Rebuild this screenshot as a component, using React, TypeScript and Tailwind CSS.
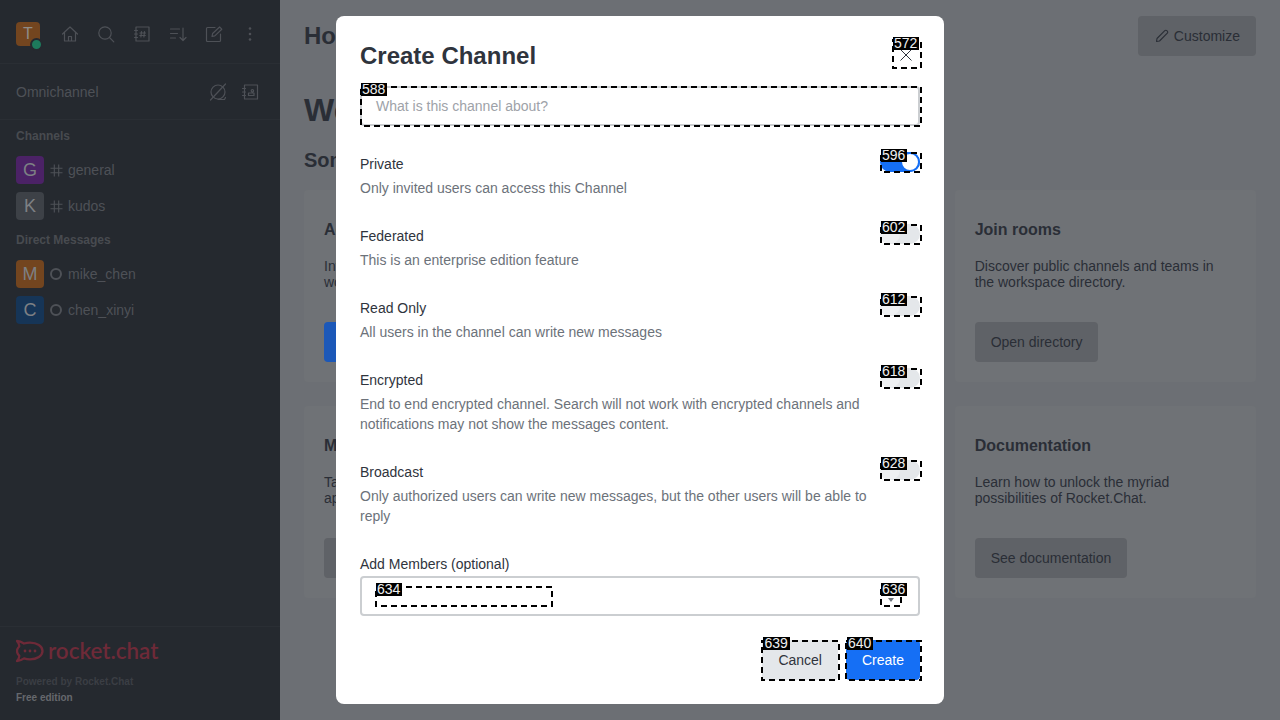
import React from "react";

const Ico = ({ children, size = 20 }: { children: React.ReactNode; size?: number }) => (
  <svg width={size} height={size} viewBox="0 0 20 20" fill="none" stroke="#4e5157" strokeWidth="1.2" strokeLinecap="round" strokeLinejoin="round">
    {children}
  </svg>
);

const Mark = ({ id, box, children }: { id: string; box: string; children?: React.ReactNode }) => (
  <div className="relative">
    {children}
    <svg className={`absolute pointer-events-none ${box}`}>
      <rect x="1" y="1" className="[width:calc(100%-2px)] [height:calc(100%-2px)]" fill="none" stroke="#000" strokeWidth="2" strokeDasharray="6 4" />
    </svg>
    <span className="absolute left-[1px] -top-[3px] bg-black text-[#f0f0f0] text-[14px] leading-[13px] pl-[1px] pr-[2px] font-['Liberation_Sans',sans-serif]">{id}</span>
  </div>
);

const Toggle = ({ on, id }: { on?: boolean; id: string }) => (
  <Mark id={id} box="left-0 top-0 w-[42px] h-[21px]">
    <div className={`w-10 h-5 rounded-full flex ${on ? "bg-[#156ff5] justify-end" : "bg-[#e4e7ea] justify-start"}`}>
      <div className={`w-5 h-5 rounded-full ${on ? "bg-white border-2 border-[#156ff5]" : "bg-[#eef0f2]"}`} />
    </div>
  </Mark>
);

const Opt = ({ title, desc, on, id }: { title: string; desc: string; on?: boolean; id: string }) => (
  <div className="flex items-start justify-between">
    <div className="w-[512px]">
      <div className="text-sm leading-5 text-[#2f343d]">{title}</div>
      <div className="mt-1 text-sm leading-5 text-[#6c727a]">{desc}</div>
    </div>
    <div className="-mt-[2px]">
      <Toggle on={on} id={id} />
    </div>
  </div>
);

const Card = ({ title, text, btn, blue }: { title: string; text: string; btn: string; blue?: boolean }) => (
  <div className="h-[192px] bg-[#6f7276] rounded px-5 pt-[29px]">
    <div className="pt-[1px] text-base leading-5 font-bold text-[#2a2e36]">{title}</div>
    <div className="mt-[18px] h-8 text-sm leading-4 text-[#2a2e36]">{text}</div>
    <div className={`mt-8 inline-flex h-10 items-center rounded px-4 text-sm ${blue ? "bg-[#1c58b8] text-[#c4c6c9]" : "bg-[#5f6267] text-[#2a2e36]"}`}>{btn}</div>
  </div>
);

const Room = ({ letter, bg, name, dm }: { letter: string; bg: string; name: string; dm?: boolean }) => (
  <div className="h-9 px-4 flex items-center">
    <div className={`w-7 h-7 rounded flex items-center justify-center text-lg text-[#7d8084] ${bg}`}>{letter}</div>
    <div className="w-6 flex justify-center">
      {dm ? (
        <span className="w-3 h-3 rounded-full border-2 border-[#4e5157]" />
      ) : (
        <svg width="13" height="13" viewBox="0 0 13 13" fill="none" stroke="#4e5157" strokeWidth="1.1">
          <path d="M4.300 0.500V12.500M8.700 0.500V12.500M0.500 4.300H12.500M0.500 8.700H12.500" />
        </svg>
      )}
    </div>
    <span className="text-sm text-[#4e5157]">{name}</span>
  </div>
);

export default function App() {
  return (
    <div className="relative w-[1280px] h-[720px] overflow-hidden flex font-['Liberation_Sans',Arial,sans-serif] bg-[#6c6f74]">
      <aside className="w-[280px] h-full bg-[#25292f] flex flex-col shrink-0">
        <div className="h-[64px] px-4 pt-[4px] flex items-center border-b border-[#2a2e34]">
          <div className="relative w-6 h-6 rounded bg-[#73451f] flex items-center justify-center text-base text-[#8f8c88]">
            T
            <span className="absolute -right-[3px] -bottom-[5px] w-[13px] h-[13px] rounded-full bg-[#1d7a5c] border-2 border-[#25292f]" />
          </div>
          <div className="ml-5 flex items-center gap-4">
            <Ico><path d="M2.500 10 10 3l7.500 7M4.500 8.500V17h11V8.500M8.500 17v-4.500h3V17" /></Ico>
            <Ico><circle cx="9" cy="9" r="6.200" /><path d="m13.500 13.500 4.300 4.300" /></Ico>
            <Ico><path d="M4 3h13v14H4zM2.500 6.500H5.500M2.500 10H5.500M2.500 13.500H5.500M9.500 7.500l-.6 5.500M12.500 7.500l-.6 5.500M8 9h5.500M7.800 11.500h5.500" /></Ico>
            <Ico><path d="M2.500 5h9M2.500 9.500h7M2.500 14h5M15 4v12.500M12 13.500l3 3 3-3" /></Ico>
            <Ico><path d="M16.500 10v6.500a1 1 0 0 1-1 1h-12a1 1 0 0 1-1-1v-12a1 1 0 0 1 1-1H11M8 12.500l.6-3 7-6.500 2.200 2.200-7 6.700z" /></Ico>
            <svg width="20" height="20" viewBox="0 0 20 20" fill="#4e5157"><circle cx="10" cy="4.500" r="1.300" /><circle cx="10" cy="10" r="1.300" /><circle cx="10" cy="15.500" r="1.300" /></svg>
          </div>
        </div>
        <div className="h-[56px] pl-4 pr-[20px] flex items-center justify-between border-b border-[#2a2e34]">
          <span className="text-sm text-[#4e5157]">Omnichannel</span>
          <div className="flex items-center gap-3">
            <Ico><circle cx="10" cy="10" r="7" /><path d="M2.500 18 17.500 2M10 17.500h6.500l1-2" /></Ico>
            <Ico><path d="M4.500 3h13v14h-13zM2.500 6.500h3M2.500 10h3M2.500 13.500h3M8.500 13.500h5.500v-2.500H8.500zM11.200 8.800a1.200 1.200 0 1 0 0-.1" /></Ico>
          </div>
        </div>
        <div className="h-8 px-4 flex items-center text-xs font-bold text-[#484b50]">Channels</div>
        <Room letter="G" bg="bg-[#4b2266]" name="general" />
        <Room letter="K" bg="bg-[#3d4147]" name="kudos" />
        <div className="h-8 px-4 flex items-center text-xs font-bold text-[#484b50]">Direct Messages</div>
        <Room letter="M" bg="bg-[#73451f]" name="mike_chen" dm />
        <Room letter="C" bg="bg-[#163557]" name="chen_xinyi" dm />
        <div className="mt-auto h-[94px] border-t border-[#2a2e34] px-4 pt-[12px]">
          <div className="flex items-center h-6">
            <svg width="28" height="24" viewBox="0 0 28 24" fill="none">
              <path d="M1 2c3 0 5 1.200 7 2.500C10 4 12 3.700 14 3.700c7 0 12.500 3.500 12.500 8.300S21 20.300 14 20.300c-2 0-4-.3-6-.9C6 20.800 4 22 1 22c1.500-1.800 2.500-3.600 2.200-5.500C1.800 15.200 1 13.700 1 12s.8-3.200 2.200-4.500C3.500 5.600 2.500 3.800 1 2z" stroke="#6e2a38" strokeWidth="2.300" strokeLinejoin="round" />
              <circle cx="9" cy="12" r="1.400" fill="#6e2a38" /><circle cx="14" cy="12" r="1.400" fill="#6e2a38" /><circle cx="19" cy="12" r="1.400" fill="#6e2a38" />
            </svg>
            <span className="ml-[4px] text-[22.400px] leading-6 font-semibold text-[#6e2a38] font-['Lato',sans-serif]">rocket.chat</span>
          </div>
          <div className="mt-[11px] text-[10px] leading-4 font-bold text-[#3b3e44]">Powered by Rocket.Chat</div>
          <div className="text-[10px] leading-4 font-bold text-[#65686d]">Free edition</div>
        </div>
      </aside>

      <main className="flex-1 px-6">
        <div className="h-[72px] flex items-center justify-between">
          <div className="text-2xl font-bold text-[#2a2e36]">Home</div>
          <div className="h-10 px-4 flex items-center gap-1 rounded bg-[#5f6267] text-sm text-[#2a2e36]">
            <svg width="16" height="16" viewBox="0 0 16 16" fill="none" stroke="#2a2e36" strokeWidth="1.100" strokeLinejoin="round"><path d="M2.500 13.500l.5-3L10.800 2.700a1.400 1.400 0 0 1 2 0l.5.5a1.400 1.400 0 0 1 0 2L5.500 13z" /></svg>
            Customize
          </div>
        </div>
        <div className="mt-[18px] text-[32px] leading-10 font-bold text-[#2a2e36]">Welcome to Workspace</div>
        <div className="mt-4 text-xl leading-7 font-bold text-[#2a2e36]">Some ideas to get you started</div>
        <div className="mt-4 grid grid-cols-3 gap-6">
          <Card title="Add users" text="Invite people to your workspace and start working together." btn="Add users" blue />
          <Card title="Create channels" text="Create public and private channels by team or topic." btn="Create channel" />
          <Card title="Join rooms" text="Discover public channels and teams in the workspace directory." btn="Open directory" />
          <Card title="Mobile apps" text="Take Rocket.Chat with you with mobile applications." btn="Google Play" />
          <Card title="Desktop apps" text="Install Rocket.Chat on your Windows, Linux and Mac." btn="Windows" />
          <Card title="Documentation" text="Learn how to unlock the myriad possibilities of Rocket.Chat." btn="See documentation" />
        </div>
      </main>

      <div className="absolute inset-0 flex items-center justify-center pointer-events-none">
        <div className="w-[608px] h-[688px] bg-white rounded-lg p-6 flex flex-col">
          <div className="h-7 flex items-center justify-between">
            <div className="pt-1 text-2xl font-bold text-[#2f343d]">Create Channel</div>
            <Mark id="572" box="left-0 -top-[1px] w-[30px] h-[30px]">
              <div className="w-7 h-7 flex items-center justify-center pt-[2px]">
                <svg width="16" height="16" viewBox="0 0 16 16" fill="none" stroke="#2f343d" strokeWidth="1"><path d="M2.500 2.500l11 11M13.500 2.500l-11 11" /></svg>
              </div>
            </Mark>
          </div>
          <div className="mt-[18px]">
            <Mark id="588" box="left-0 top-0 w-[562px] h-[41px]">
              <div className="h-10 rounded border-2 border-[#cbced1] flex items-center px-[14px] text-sm text-[#9ea2a8]">What is this channel about?</div>
            </Mark>
          </div>
          <div className="mt-7 flex flex-col gap-7">
            <Opt title="Private" desc="Only invited users can access this Channel" on id="596" />
            <Opt title="Federated" desc="This is an enterprise edition feature" id="602" />
            <Opt title="Read Only" desc="All users in the channel can write new messages" id="612" />
            <Opt title="Encrypted" desc="End to end encrypted channel. Search will not work with encrypted channels and notifications may not show the messages content." id="618" />
            <Opt title="Broadcast" desc="Only authorized users can write new messages, but the other users will be able to reply" id="628" />
            <div>
              <div className="text-sm leading-5 text-[#2f343d]">Add Members (optional)</div>
              <div className="mt-[2px] h-10 rounded border-2 border-[#cbced1] flex items-center justify-between pl-[13px] pr-[16px]">
                <Mark id="634" box="left-0 top-0 w-[178px] h-[21px]">
                  <div className="w-[178px] h-[21px]" />
                </Mark>
                <Mark id="636" box="left-0 top-0 w-[22px] h-[21px]">
                  <div className="w-[22px] h-[21px] flex items-end justify-center pb-[5px]">
                    <svg width="6" height="4" viewBox="0 0 6 4" fill="#6c727a"><path d="M0 0h6L3 4z" /></svg>
                  </div>
                </Mark>
              </div>
            </div>
          </div>
          <div className="mt-6 flex justify-end gap-2">
            <Mark id="639" box="-left-[1px] top-0 w-[79px] h-[41px]">
              <div className="h-10 px-4 rounded bg-[#e4e7ea] flex items-center text-sm text-[#2f343d]">Cancel</div>
            </Mark>
            <Mark id="640" box="-left-[1px] top-0 w-[77px] h-[41px]">
              <div className="h-10 px-4 rounded bg-[#156ff5] flex items-center text-sm text-white">Create</div>
            </Mark>
          </div>
        </div>
      </div>
    </div>
  );
}
